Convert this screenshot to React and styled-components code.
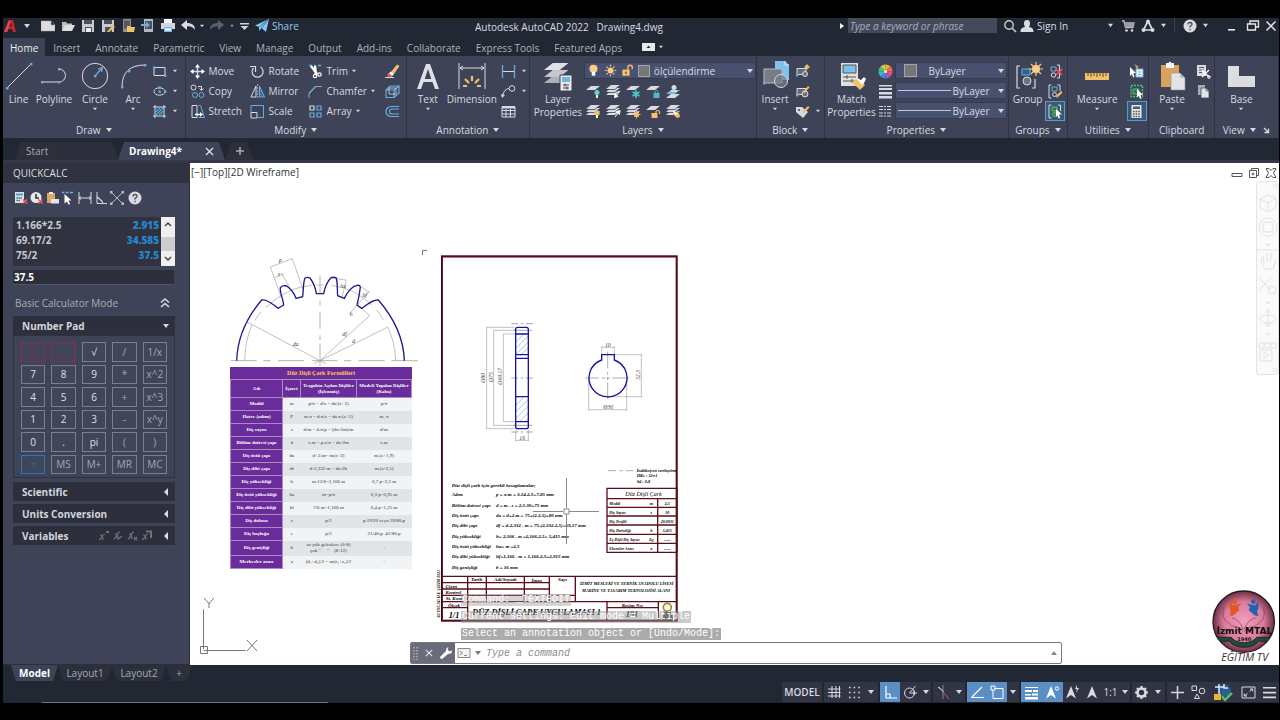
import React, { useState } from 'react'
import styled, { createGlobalStyle, css } from 'styled-components';

const ui = '"Open Sans", "Noto Sans", sans-serif';
const dark = '#222833';
const panel = '#3f4357';
const W = '#d9dbe2';
const B = '#68aee0';
const Y = '#f3c06b';

const GlobalStyle = createGlobalStyle`
  * { box-sizing: border-box; }
  html, body, #root { height: 100%; }
  body { margin: 0; background: #000; overflow: hidden; }
  button, input, select { font: inherit; color: inherit; margin: 0; }
  button { background: none; border: 0; padding: 0; cursor: pointer; }
  svg { display: block; flex: none; }
`

// ---------- icons ----------
const Sheet = ({ x = 0, y = 0, s = 1, fill = W }) => (
  <path d={`M${x + 5 * s} ${y}h${9 * s}l${-5 * s} ${4 * s}h${-9 * s}z`} fill={fill} />
)
const Stack = () => <><Sheet y={7} /><rect x="0" y="6.6" width="12" height=".8" fill={panel} /><Sheet y={4} /><path d="M0 8.5h9l4-3.4" stroke={panel} fill="none" strokeWidth=".8" /><Sheet y={1} /><path d="M0 5.5h9l4-3.4" stroke={panel} fill="none" strokeWidth=".8" /></>
const Cross = ({ x, y }) => <path d={`M${x} ${y}l4 4M${x + 4} ${y}l-4 4`} stroke="#ef5a5a" strokeWidth="1.6" />
const Dots = ({ pts }) => pts.map(([x, y]) => <rect key={x + '-' + y} x={x - 1} y={y - 1} width="2.4" height="2.4" fill={B} />)

const icons = {
  // title bar
  logo: <><path d="M1 13L6 1h4l3 12h-3l-.7-3H5.500l-1.300 3zM6.500 7.500h2.400L8 4z" fill="#c8262d" /><path d="M1 13L6 1l1.500 2L4.200 13z" fill="#e8464b" /></>,
  newFile: <path d="M0 2h10l4 4v6H0z M10 2v4h4" fill="#dcdcdf" stroke="#aaa" strokeWidth=".5" />,
  open: <><path d="M1 12V3h4l1 1.500h5V6" fill="#bdbec2" /><path d="M1 12L4 6h10l-3 6z" fill="#dedee0" /></>,
  save: <><path d="M1 1h12v12H1z" fill="#c9cacf" /><path d="M3 1h8v4H3zM4 8h7v5H4z" fill="#4b4f58" /><path d="M5 9h5v4H5z" fill="#ececee" /></>,
  saveAs: <><path d="M1 1h12v12H1z" fill="#c9cacf" /><path d="M3 1h8v4H3zM4 8h7v5H4z" fill="#4b4f58" /><path d="M6 13l6-7 2 2-6 5z" fill={Y} /></>,
  openWeb: <><path d="M2 0h8v13H2z" fill="#8d8e94" /><path d="M3 1.500h6v8H3z" fill="#55585f" /><path d="M6 13V7h3l1 1h4l-1 5z" fill={Y} /></>,
  saveMobile: <><path d="M3 0h9v13H3z" fill="#b4b6bb" /><path d="M4 2h7v8H4z" fill="#4b5260" /><path d="M0 5h5V2.500L9 6 5 9V7H0z" fill={B} /></>,
  print: <><path d="M3 0h8v4H3z" fill="#fff" /><path d="M0 4h14v6H0z" fill="#d4d5da" /><path d="M3 8h8v5H3z" fill="#72b7e8" /><path d="M4 9.500h6v2H4z" fill="#fff" /></>,
  undo: <path d="M0 6l6-5v3c5 0 8 2 8 7-2-3-4-4-8-3.700V11z" fill="#dadbe0" />,
  redo: <path d="M14 6L8 1v3C3 4 0 6 0 11c2-3 4-4 8-3.700V11z" fill="#5c606b" />,
  customize: <path d="M2 3h9v1.500H2zM2.500 6h8L6.500 10z" fill="#d0d2d8" />,
  plane: <><path d="M0 6.500L14 0l-3 13-4.500-4L4 12V8z" fill="#86c8f3" /><path d="M4 8l9-7-6.500 8" fill="none" stroke="#2d6d9b" strokeWidth=".8" /></>,
  search: <><circle cx="6" cy="6" r="4.200" fill="none" stroke="#c9cbd2" strokeWidth="1.400" /><path d="M9 9l4 4" stroke="#c9cbd2" strokeWidth="1.600" /></>,
  user: <path d="M7 1a3 3.400 0 013 3.400C10 6.500 9 7.500 9 8c3 .7 4.500 1.500 4.500 5h-13C.5 9.500 2 8.700 5 8c0-.5-1-1.500-1-3.600A3 3.400 0 017 1z" fill={W} />,
  cart: <><path d="M1 2h2l1.500 6.500H12L13 4H4" fill="none" stroke="#b9bbc2" strokeWidth="1.300" /><path d="M4 4h9l-1 4H5z" fill="#9b9da5" /><circle cx="5.500" cy="11.500" r="1.300" fill={W} /><circle cx="11" cy="11.500" r="1.300" fill={W} /></>,
  apps: <><path d="M7 2L2.500 11h9z" fill="none" stroke={W} strokeWidth="1.700" /><circle cx="7" cy="2.800" r="2" fill={W} /><circle cx="2.500" cy="11" r="2" fill={W} /><circle cx="11.500" cy="11" r="2" fill={W} /></>,
  help: <><circle cx="7" cy="7" r="6.500" fill={W} /><path d="M5 5.500Q5 3.500 7 3.500T9 5.300Q9 6.500 7 7.400V8.600M7 9.700v1.500" fill="none" stroke="#4a4e5b" strokeWidth="1.300" /></>,
  min: <path d="M3 10h7v1.600H3z" fill="#e6e7ea" />,
  restore: <path d="M4 5V2h8.500v6H10M1.500 5h8v6h-8z" fill="none" stroke="#e6e7ea" strokeWidth="1.300" />,
  close: <path d="M2.500 2.500l9 9M11.500 2.500l-9 9" stroke="#e6e7ea" strokeWidth="1.500" />,

  // draw
  line: <><path d="M3 27L27 3" stroke={W} /><Dots pts={[[3, 27], [27, 3]]} /></>,
  polyline: <><path d="M3 21h17a6.500 6.500 0 000-13" fill="none" stroke={W} /><Dots pts={[[3, 21], [20, 21], [20, 8]]} /></>,
  circle: <><circle cx="15" cy="15" r="12.700" fill="none" stroke={W} /><path d="M15 15l7-8m-4 1l4.300-1.300-.8 4.300" stroke={B} fill="none" strokeWidth="1.200" /><Dots pts={[[15, 15]]} /></>,
  arc: <><path d="M4 26Q4 4 27 4" fill="none" stroke={W} /><Dots pts={[[4, 26], [11, 10], [27, 4]]} /></>,
  rect: <><path d="M2 3.500h11v8H2z" fill="none" stroke={W} /><Dots pts={[[2, 3.500], [13, 11.500]]} /></>,
  ellipse: <><ellipse cx="7.500" cy="7.500" rx="5.500" ry="3.700" fill="none" stroke={W} /><Dots pts={[[7.500, 7.500], [7.500, 3.500], [13, 7.500]]} /></>,
  hatch: <><path d="M3 1v13M12 1v13M1 3h13M1 12h13" stroke={W} /><path d="M4 4h7v7H4z" fill="#386a97" /><path d="M4 8l4-4M4 11l7-7M7 11l4-4" stroke={B} /></>,

  // modify
  move: <><path d="M7.500 2v11M2 7.500h11" stroke={W} strokeWidth="1.400" /><path d="M7.500 0l2.500 3.500H5zM7.500 15L10 11.500H5zM0 7.500L3.500 5v5zM15 7.500L11.500 5v5z" fill="#fff" /></>,
  rotate: <><path d="M10.500 3A5.500 5.500 0 113.500 4" fill="none" stroke={W} strokeWidth="1.200" /><path d="M0 2.500h5.500V8" fill="none" stroke={W} strokeWidth="1.200" /></>,
  trim: <><path d="M1 1.500h3M6 1.500h2M10 1.500h3" stroke={B} strokeWidth="1.500" /><path d="M3 2l6 8M7 2l1 9" stroke="#fff" strokeWidth="2.400" /><circle cx="7" cy="12" r="1.700" fill="none" stroke="#fff" strokeWidth="1.200" /><circle cx="11.500" cy="10.500" r="1.700" fill="none" stroke="#fff" strokeWidth="1.200" /></>,
  copy: <><circle cx="3.500" cy="3.500" r="2.500" fill="none" stroke={W} /><circle cx="5" cy="11" r="2.500" fill="none" stroke={B} /><circle cx="11.500" cy="11" r="2.500" fill="none" stroke={B} /><path d="M8 2.500h3.500V6m-2-1.500l2 2 2-2" fill="none" stroke={W} /></>,
  mirror: <><path d="M6 2v11H1z" fill="none" stroke={W} /><path d="M9.500 2v11h5z" fill="#3b6f9d" stroke={B} /><path d="M7.700 0v15" stroke={W} strokeDasharray="2 1" strokeWidth=".7" /></>,
  chamfer: <><path d="M1 14V9.500L7.500 2.500H14" fill="none" stroke="#9fa3ae" /><path d="M1 9.500l6.500-7" stroke={B} strokeWidth="1.300" /></>,
  stretch: <><path d="M2 1.500h5v12H2z" fill="none" stroke={W} /><path d="M8.500 1.500h2l4 12h-6" fill="none" stroke={B} /><path d="M5 10.500h6" stroke="#fff" strokeWidth="1.500" /><path d="M10 8l3 2.500-3 2.500z" fill="#fff" /></>,
  scale: <><path d="M1 8.500V1.500h12.500v12H8" fill="none" stroke={B} /><path d="M1 8.500h6v5.500H1z" fill="none" stroke={W} /></>,
  array: <><path d="M2 2h4v4H2z" fill="none" stroke={W} strokeWidth="1.200" /><path d="M9 2h4v4H9zM2 9h4v4H2zM9 9h4v4H9z" fill="none" stroke={B} strokeWidth="1.200" /></>,
  erase: <><path d="M6 8l6-7.500 2.500 1.500L9 10z" fill={Y} /><path d="M3 10l3-2.500L9 10l-2.500 2.500z" fill="#fff" /><path d="M2 11l2-2 3 3-1 1H3z" fill="#e7574f" /><path d="M0 13.500h9" stroke={W} /></>,
  explode: <><path d="M1 6h8v7.500H1zM1 6l4-4h9L9 6M14 2v7l-5 4.500" fill="none" stroke={B} strokeWidth="1.200" /><path d="M4 4h7v6H4z" fill="none" stroke={W} strokeWidth=".8" /></>,
  offset: <path d="M14 2.500H6a5 5 0 000 10h8M14 5H7a2.500 2.500 0 000 5h7" fill="none" stroke={B} strokeWidth="1.200" />,

  // annotation
  text: <path d="M4 28L13 3h4l9 25h-4l-2.500-7h-9L8 28zM11.700 18h6.600L15 8z" fill="#dfe0e5" />,
  dimension: <><path d="M2 2v26M28 2v26" stroke={W} /><path d="M3 7h24M6 5L3 7l3 2M24 5l3 2-3 2" stroke={W} fill="none" /><path d="M6 25h4M20 25h4M8 18l4 4M15 15v5M22 18l-4 4" stroke={Y} strokeWidth="2.200" /></>,
  linear: <><path d="M1.500 1v13M13.500 1v13" stroke={B} strokeWidth="1.300" /><path d="M2 7.500h11" stroke={W} /></>,
  leader: <><circle cx="11" cy="4.500" r="2.800" fill="none" stroke={W} /><path d="M8 4.500Q3 5 1.500 12" stroke={W} fill="none" /><path d="M0 10l1 4 3-3z" fill={W} /></>,
  table: <><path d="M1 3h13v10H1zM1 6.500h13M1 10h13M5 5v8M9.500 5v8" fill="none" stroke={W} /><path d="M1 2h13v2.500H1z" fill={W} /></>,

  // layers
  layerProps: <><Sheet x={1} y={15} s={1.750} fill="#aeb0b7" /><Sheet x={1} y={9} s={1.750} fill="#c5c6cb" /><Sheet x={1} y={2} s={1.750} fill="#e0e1e4" /><path d="M17 14h12v16H17z" fill="#e9eaed" stroke={panel} /><path d="M19 16h8v5h-8z" fill="#6fb4e3" /><path d="M20 24h6M20 27h6M22 22.500v3M24 25.500v3" stroke="#444" /></>,
  bulb: <><circle cx="7.500" cy="5.500" r="4.700" fill="#f7cf85" /><path d="M5.500 9h4v4.500h-4z" fill="#fff" /></>,
  sun: <><circle cx="7.500" cy="7.500" r="3.500" fill="#f7cb7c" /><path d="M7.500 1v2M7.500 12v2M1 7.500h2M12 7.500h2M3 3l1.500 1.500M12 3l-1.500 1.500M3 12l1.500-1.500M12 12l-1.500-1.500" stroke="#f7cb7c" strokeWidth="1.400" /></>,
  unlock: <><path d="M1.500 6.500H10v7H1.500z" fill={Y} /><path d="M8 7V4q0-2.500 2.500-2.500T13 4v2" fill="none" stroke={Y} strokeWidth="1.600" /><path d="M5.700 9v2.500" stroke="#444" strokeWidth="1.400" /></>,
  layOff: <><Sheet y={2} /><circle cx="11" cy="8.500" r="2.500" fill="#66d3d6" /><path d="M10 11h2v3h-2z" fill="#eee" /></>,
  layIso: <><Stack /><path d="M14 7l-4 5M8.500 13.500l.5-4 3 3z" stroke="#fff" fill="#fff" /></>,
  layFreeze: <><Sheet y={2} /><path d="M10 6v8M6.500 8l7 4M13.500 8l-7 4" stroke="#4fc6c6" strokeWidth="1.700" /></>,
  layLock: <><Sheet y={2} /><path d="M7.500 9h6v5h-6z" fill="#4fb9cf" /><path d="M9 9V7.500q1.500-2.500 3 0V9" fill="none" stroke="#4fb9cf" /></>,
  layCurrent: <><Sheet y={10} /><Sheet y={6} fill="#75b9e6" /><circle cx="8" cy="3.500" r="2.500" fill={W} /><path d="M5 6h6v2H5z" fill={W} /></>,
  layOn: <><Stack /><circle cx="11" cy="9" r="2.700" fill={Y} /><path d="M10 11h2v3h-2z" fill="#fff" /></>,
  layUniso: <><Stack /><path d="M9 13l4-5M14 6.500l-.5 4-3-3z" stroke="#fff" fill="#fff" /></>,
  layThaw: <><Stack /><circle cx="10.500" cy="10.500" r="2.500" fill={Y} /><path d="M10.500 6.500v8M6.500 10.500h8M8 8l5 5M13 8l-5 5" stroke={Y} /></>,
  layUnlock: <><Sheet y={2} /><path d="M5.500 9h6v5h-6z" fill={Y} /><path d="M10 9V7.500q1.700-2.500 3.500 0V10" fill="none" stroke={Y} strokeWidth="1.200" /></>,
  layMatch: <><Stack /><path d="M8 8l5 1 1 4-3 1-4-4z" fill={Y} /><path d="M7.500 7.500l3 3" stroke="#fff" strokeWidth="1.500" /></>,

  // block
  insert: <><path d="M15 0h10l4 4v15H15z" fill="#7fc1ef" /><path d="M25 0v4h4" fill="none" stroke="#d7ecfa" /><path d="M4 8h18v14H4z" fill="#777c88" stroke="#b7bac3" /><circle cx="21" cy="20" r="6.500" fill="#777c88" fillOpacity=".7" stroke="#d9dbe2" /><Dots pts={[[4, 22]]} /></>,
  blockNew: <><path d="M2 4.500h9v6H2z" fill="#666b79" stroke={W} /><circle cx="10" cy="10" r="2.500" fill="#6f7380" stroke={W} /><circle cx="12" cy="3" r="2" fill={Y} /><path d="M12 0v6M9 3h6" stroke={Y} strokeWidth=".8" /><Dots pts={[[2, 11]]} /></>,
  blockEdit: <><path d="M2 4.500h9v6H2z" fill="#666b79" stroke={W} /><circle cx="10" cy="10" r="3" fill="#6f7380" stroke={W} /><path d="M8 8l5-6 1.500 1.200-5 6z" fill={Y} /><Dots pts={[[2, 11]]} /></>,
  attr: <><path d="M1 3h6l6 5-5 6-7-6z" fill={W} /><path d="M7 8l6-6 1.500 1.500-6 6z" fill={Y} /><circle cx="4" cy="6" r="1" fill={panel} /></>,

  // properties
  match: <><path d="M4 2h17v23H4z" fill="#dfe0e4" /><path d="M6 4h13v8H6z" fill="#7cbfec" stroke="#555" /><path d="M6 16h13M6 20h13M10 14v4M15 18v4" stroke="#555" /><path d="M15 21l6-4 7 7-5 5z" fill={Y} /><path d="M19 17l5 2 3-3 2 2-2 4-2 2z" fill="#fff" /></>,
  wheel: <>
    {['#f4a83d', '#f2733a', '#e34f7a', '#9c5cc4', '#4a7fe0', '#3fb6d8', '#4fc16b', '#c5d14b'].map((c, i) => {
      const a = i * Math.PI / 4, b = a + Math.PI / 4;
      return <path key={c} fill={c} d={`M7.500 7.500L${7.5 + 7 * Math.sin(a)} ${7.5 - 7 * Math.cos(a)}A7 7 0 01${7.5 + 7 * Math.sin(b)} ${7.5 - 7 * Math.cos(b)}z`} />
    })}<circle cx="7.500" cy="7.500" r="1.500" fill="#eee" /></>,
  weights: <path d="M1 1h13v1.500H1zM1 4h13v2H1zM1 8h13v2.500H1zM1 12h13v2.500H1z" fill={W} />,
  types: <path d="M1 2.500h13M1 5.500h13M1 9h13M1 12h13" stroke={W} strokeDasharray="4 1 2 1" />,

  // groups
  group: <><path d="M7 5H4v22h3M19 27h3V18" fill="none" stroke={W} strokeWidth="1.200" /><path d="M9 8h8v6H9z" fill="#2d628f" stroke={B} /><circle cx="14" cy="20" r="4" fill="#6e7380" stroke={W} /><circle cx="23" cy="8" r="4" fill="#f7cf85" /><path d="M23 1v14M16 8h14M18 3l10 10M28 3L18 13" stroke="#f7cf85" strokeWidth="1.200" /></>,
  ungroup: <><path d="M3 3h5v4H3z" fill="none" stroke={B} /><circle cx="5.500" cy="11" r="2.200" fill="none" stroke={W} /><path d="M9 1h2.500v13H9" stroke={W} fill="none" /><path d="M8 5l6 6M14 5l-6 6" stroke="#ef5757" strokeWidth="1.600" /></>,
  groupEdit: <><path d="M3.500 1H1v13h2.500M9.500 1H12v6" stroke={W} fill="none" /><path d="M4 3h5v4H4z" fill="none" stroke={B} /><circle cx="6.500" cy="10.500" r="2" fill="none" stroke={W} /><path d="M8 14l1-3 4-4 1.500 1.500-4 4z" fill={Y} /></>,
  groupSel: <><path d="M3.500 1H1v13h2.500M10 1h2.500v6" stroke={W} fill="none" /><path d="M4 3h5v4H4z" fill="#377c4f" stroke="#54c27b" /><circle cx="6.500" cy="10.500" r="2" fill="#377c4f" stroke="#54c27b" /><path d="M8 5l6 5.500H11L12 14l-1.500.5-1-3L8 13z" fill="#fff" /></>,

  // utilities
  measure: <><path d="M3 12h24v7H3z" fill={Y} /><path d="M6 12v3M9 12v4M12 12v3M15 12v4M18 12v3M21 12v4M24 12v3" stroke="#5a4a2c" /></>,
  quickSel: <><path d="M7 5h7v8H7z" fill="#eaf4fb" stroke={B} /><path d="M9 8h3M9 10.500h3" stroke={B} /><path d="M1 3l6 6H4.500l1 4-1.500.5-1-3.500L1 12z" fill="#fff" /><path d="M5 0l5 3-2 .5 2 3-4-3h2z" fill={Y} /></>,
  selAll: <><path d="M2 1.500h11.500v11H2z" fill="none" stroke="#53c27a" strokeDasharray="2 1" strokeWidth="1.300" /><path d="M4 5h6v5H4z" fill="#2f7a4b" stroke="#53c27a" /><path d="M8 5l6 6h-2.500l1 3.500-1.500.4-1-3L8 13z" fill="#fff" /></>,
  calc: <><path d="M2.500 1h10v13h-10z" fill="#e5e6ea" /><path d="M4 2.500h7v2.500H4z" fill="#555a68" /><path d="M4 7.500h7M4 10h7M4 12.500h7" stroke="#555a68" strokeDasharray="1.600 1" strokeWidth="1.400" /></>,

  // clipboard, view
  paste: <><path d="M4 4h18v22H4z" fill="#d9a35e" /><path d="M9 2h2.500q1.500-3 3 0H17v5H9z" fill="#f3f3f4" /><path d="M14 12h9l5 5v12H14z" fill="#e2e3e6" stroke="#8b8d95" strokeWidth=".6" /><path d="M23 12v5h5" fill="#bbb" /></>,
  cut: <><path d="M1 1h9v11H1z" fill={W} /><path d="M3 3.500h5M3 6h5M3 8.500h3" stroke="#555" /><path d="M6 6l7 7M13 6l-7 7" stroke="#fff" strokeWidth="1.200" /><circle cx="13" cy="13" r="1.300" fill="none" stroke="#fff" /></>,
  copyClip: <><path d="M2 1h7v10H2z" fill="#aaacb4" /><path d="M5 4h5l3 3v7H5z" fill="#e4e5e8" stroke={panel} strokeWidth=".8" /><path d="M10 4v3h3" fill="none" stroke="#777" /></>,
  base: <path d="M2 5h11v10h16v11H2z" fill="#dcdde1" />,
  launcher: <path d="M3 3l4 4M7.500 3.500v4h-4" stroke={W} fill="none" strokeWidth="1.300" />,

  // calculator toolbar
  clear: <><path d="M1 1h9v11H1z" fill="#dfe1e6" /><path d="M2 2.500h7v2H2z" fill="#4f9bd4" /><path d="M2.500 7h6M2.500 9.500h4" stroke="#456" strokeDasharray="1.300 .7" strokeWidth="1.400" /><Cross x={9} y={8.500} /></>,
  clearHist: <><circle cx="6" cy="6.500" r="5.500" fill="#e6e7ea" /><path d="M6 3v4h3" stroke="#333" fill="none" strokeWidth="1.600" /><Cross x={8.500} y={8.500} /></>,
  pasteVal: <><path d="M1 2h8v10H1z" fill="#dba762" /><path d="M3 1h4v2H3z" fill="#eee" /><path d="M5 8h8v4.500H5z" fill="#e5e6e9" /></>,
  getCoord: <><path d="M0 1.500h2.500M4 1.500h2.500M8 1.500h3" stroke="#6db5e8" strokeWidth="1.600" /><path d="M2.500 3l7 6.500H6.500l1.500 3.500-1.500.7L5 10.500l-2.500 2z" fill="#fff" /></>,
  distance: <path d="M1 1v12M13 1v12M1 7h12M1 7l2-1.500M1 7l2 1.500M13 7l-2-1.500M13 7l-2 1.500" stroke={W} fill="none" />,
  angle: <path d="M3 1v11.500h10M3 7q5 .5 6 5.500M3 5l5 6" stroke={W} fill="none" />,
  intersect: <><path d="M2 2l10 10M12 2L2 12" stroke={W} strokeWidth=".8" /><path d="M0 0h2.500v2.500H0zM11.500 0H14v2.500h-2.500zM0 11.500h2.500V14H0zM11.500 11.500H14V14h-2.500zM6 6h2v2H6z" fill="#b9bbc2" /></>,
  chevrons: <path d="M3 6.500L7 3l4 3.500M3 11l4-3.500 4 3.500" stroke={W} fill="none" strokeWidth="1.600" />,
  varTools: <g fill="none" stroke="#70737f" strokeWidth="1.200"><path d="M0 11q2-1 3-3.500T6 5M1 6q3 0 3 5M15 10q2-1 3-4t3-3M16 5q3 0 3 5l4-3M29 10q2-1 3-4t3-3M30 5q3 0 3 5M35 8l3 3m0-3l-3 3M43 11q2-1 3-3.500T49 5M44 6q3 0 3 5" /><path d="M7 3h3M47 2.500h5V9" strokeWidth="2" /></g>,

  // status bar
  grid: <path d="M5 1v12M9 1v12M1 4h12.500M1 7.500h12.500M1 11h12.500M12.500 1v12" stroke={W} />,
  snap: <path d="M2 2.500h11M2 7.500h11M2 12.500h11" stroke={W} strokeWidth="1.600" strokeDasharray="1.600 3" />,
  ortho: <path d="M3 1v12h11M3 9h4v4" stroke="#fff" fill="none" strokeWidth="1.200" />,
  polar: <><circle cx="6.500" cy="8" r="5" fill="none" stroke={W} /><path d="M6.500 8l6-7M6.500 8H14M11 5v5" stroke={W} fill="none" /></>,
  iso: <><path d="M7 0v14" stroke="#7e8290" /><path d="M3 2l5 5" stroke="#59b36a" /><path d="M6 6l7 8" stroke="#d25d5d" /><path d="M2 2l5 4" stroke={W} /></>,
  track: <path d="M1 12.500h13M2 12L12 2" stroke="#fff" strokeWidth="1.200" />,
  osnap: <><path d="M3 3.500h10v10H3z" fill="none" stroke="#fff" /><path d="M1 1h4v4H1z" fill="#5b93c8" stroke="#fff" /></>,
  lwt: <path d="M1 2h13v1H1zM1 5h7v2H1zM9 5h5v2H9zM1 9h6v1.500H1zM8 8.500h6v2H8zM1 12h13v2.500H1z" fill="#fff" />,
  anno1: <><path d="M6 1l5 12.500L6 10l-5 3.500z" fill="#fff" /><circle cx="12" cy="3.500" r="1.700" fill="none" stroke="#fff" /></>,
  anno2: <><path d="M6 1l5 12.500L6 10l-5 3.500z" fill={W} /><path d="M12 0l-2 4h2l-1 4 3-5h-2z" fill={W} /></>,
  anno3: <path d="M7 1l5 12.500L7 10l-5 3.500z" fill={W} />,
  gear: <><circle cx="7.500" cy="7.500" r="4" fill="none" stroke={W} strokeWidth="2.600" /><path d="M7.500 1v2.500M7.500 11.500V14M1 7.500h2.500M11.500 7.500H14M3 3l2 2M10 10l2 2M12 3l-2 2M5 10l-2 2" stroke={W} strokeWidth="2.200" /></>,
  plus: <path d="M7.500 1v13M1 7.500h13" stroke={W} strokeWidth="1.500" />,
  isolate: <><path d="M1 1h4.500v4.500H1z" fill="none" stroke={W} /><circle cx="11" cy="6" r="2.800" fill="none" stroke={W} /><path d="M6 9l-2.500 4.500h5z" fill="none" stroke={W} /></>,
  perf: <><circle cx="10.500" cy="8" r="6.500" fill="#2c5f8f" /><path d="M1 4h9M5 1v10M10 1v4h4" stroke="#d8e9f7" strokeWidth="1.500" fill="none" /><path d="M0 11h7v6H0z" fill="#f1b233" /><path d="M8 13.500l3 3.500 7-7" stroke="#5cbf5f" strokeWidth="2.400" fill="none" /></>,
  full: <path d="M1 2h13v11H1zM8.500 6.500L11.500 4M9 4h2.700v2.500M6.500 8.500l-3 2.500M3.300 8.500V11H6" stroke={W} fill="none" />,
  menu: <path d="M1 2h13v1.600H1zM1 6.800h13v1.600H1zM1 11.600h13v1.600H1z" fill={W} />,
  wrench: <path d="M1 11l6-6q-.5-3 2.500-4l-1 2.500 2 2L13 4.500q0 3.500-4 3.500l-6 5q-2 0-2-2z" fill="#fff" />,
  grip: <path d="M1 1v13M4 1v13" stroke="#c4c5cd" strokeWidth="1.200" strokeDasharray="1.500 1.500" />,
  prompt: <><path d="M3 2.500h12v9H3z" fill="#f3f3f3" stroke="#888" /><path d="M5 5l2.500 2L5 9M9 9.500h3" stroke="#888" fill="none" /></>,
}

const Icon = ({ name, w = 15, h = w, box = w }) => (
  <svg width={w} height={h} viewBox={`0 0 ${box} ${Math.round(box * h / w)}`} aria-hidden="true">{icons[name]}</svg>
)
const Caret = ({ s = 6, c = '#d5d7de' }) => (
  <svg width={s} height={s} viewBox="0 0 6 6" aria-hidden="true"><path d="M0 1h6L3 5z" fill={c} /></svg>
)

// ---------- title bar ----------
const Frame = styled.div`
  height: 100vh;
  padding: 18px 1px 17px 3px;
  display: flex;
  flex-direction: column;
  font: 10px/14px ${ui};
  color: #d9dbe1;
`
const Shell = styled.div`
  flex: 1;
  min-height: 0;
  display: flex;
  flex-direction: column;
  background: ${dark};
`
const TitleBar = styled.header`
  display: flex;
  height: 20px;
  align-items: flex-start;
`
const Group = styled.div`
  display: flex;
  height: 15px;
  align-items: center;
`
const Slot = styled.button`
  width: ${p => p.$w}px;
  height: 15px;
  display: flex;
  justify-content: center;
  align-items: center;
`
const Share = styled.button`
  display: flex;
  align-items: center;
  gap: 3px;
  margin-left: 3px;
  color: #8fc9f0;
`
const Title = styled.h1`
  flex: 1;
  margin: 0;
  padding: 2px 0 0;
  font-size: 10px;
  font-weight: 400;
  text-align: center;
  white-space: pre;
`
const Search = styled.input`
  width: 149px;
  height: 15px;
  margin: 0 3px;
  padding: 0 2px;
  border: 0;
  background: #434a5b;
  font-style: italic;
  &::placeholder { color: #a9adb8; opacity: 1; }
`
const SignIn = styled.button`
  display: flex;
  gap: 3px;
  width: 84px;
  align-items: center;
  white-space: nowrap;
`
const Rule = styled.span`
  width: 1px;
  height: 15px;
  margin: 0 5px 0 4px;
  background: #3a404e;
`
const WindowSlots = styled.div`
  display: flex;
  margin-left: 11px;
`

const TopBar = () => (
  <TitleBar>
    <Group>
      <Slot $w={14} aria-label="Application menu"><Icon name="logo" w={14} /></Slot>
      <Slot $w={20} aria-label="More"><Caret /></Slot>
      {[['newFile', 21], ['open', 20], ['save', 20], ['saveAs', 20], ['openWeb', 20], ['saveMobile', 20], ['print', 20], ['undo', 20]].map(([n, w]) =>
        <Slot key={n} $w={w} aria-label={n}><Icon name={n} w={14} /></Slot>
      )}
      <Slot $w={8} aria-label="Undo list"><Caret s={4} /></Slot>
      <Slot $w={22} aria-label="Redo"><Icon name="redo" w={14} /></Slot>
      <Slot $w={8} aria-label="Redo list"><Caret s={4} c="#8b8f9a" /></Slot>
      <Slot $w={16} aria-label="Customize"><Icon name="customize" w={12} /></Slot>
      <Share><Icon name="plane" w={14} />Share</Share>
    </Group>
    <Title>{'Autodesk AutoCAD 2022   Drawing4.dwg'}</Title>
    <Group>
      <svg width="6" height="8" viewBox="0 0 6 8"><path d="M1 1l4 3-4 3z" fill="#fff" /></svg>
      <Search placeholder="Type a keyword or phrase" aria-label="Search" />
      <Slot $w={20} aria-label="Search"><Icon name="search" w={14} /></Slot>
      <SignIn><Icon name="user" w={14} />Sign In</SignIn>
      <Slot $w={13} aria-label="Account"><Caret s={5} /></Slot>
      <Slot $w={22} aria-label="Store"><Icon name="cart" w={14} /></Slot>
      <Slot $w={18} aria-label="Apps"><Icon name="apps" w={14} /></Slot>
      <Slot $w={13} aria-label="Apps list"><Caret s={5} /></Slot>
      <Rule />
      <Slot $w={20} aria-label="Help"><Icon name="help" w={14} /></Slot>
      <Slot $w={10} aria-label="Help list"><Caret s={5} /></Slot>
      <WindowSlots>
        <Slot $w={22} aria-label="Minimize"><Icon name="min" w={14} /></Slot>
        <Slot $w={20} aria-label="Restore"><Icon name="restore" w={14} /></Slot>
        <Slot $w={16} aria-label="Close"><Icon name="close" w={14} /></Slot>
      </WindowSlots>
    </Group>
  </TitleBar>
)

// ---------- ribbon ----------
const Tabs = styled.nav`
  display: flex;
  height: 18px;
  align-items: stretch;
`
const Tab = styled.button`
  padding: 1px 7px 0;
  margin-right: 1px;
  white-space: nowrap;
  color: ${p => p.$on ? '#eceef2' : '#aeb2bc'};
  background: ${p => p.$on ? panel : 'none'};
`
const Toggle = styled.button`
  display: flex;
  align-items: center;
  gap: 4px;
  margin-left: 12px;
  svg:first-child { background: #e8e9ec; }
`
const Ribbon = styled.section`
  display: flex;
  height: 82px;
  background: ${panel};
`
const Panel = styled.div`
  flex: ${p => p.$w} 1 0;
  min-width: 0;
  display: flex;
  flex-direction: column;
  border-right: 1px solid #2e3242;
`
const Tools = styled.div`
  flex: 1;
  display: flex;
  align-items: flex-start;
  padding: 5px 0 0 ${p => p.$pad || 0}px;
`
const PanelTitle = styled.div`
  display: flex;
  justify-content: center;
  align-items: center;
  gap: 5px;
  height: 16px;
`
const Big = styled.button`
  flex: none;
  width: ${p => p.$w}px;
  display: flex;
  flex-direction: column;
  align-items: center;
  line-height: 13px;
  span { margin-top: 2px; white-space: nowrap; }
  svg + span + svg { margin-top: 1px; }
`
const Col = styled.div`
  flex: none;
  width: ${p => p.$w ? p.$w + 'px' : 'auto'};
  display: flex;
  flex-direction: column;
`
const Row = styled.div`
  display: flex;
  align-items: center;
  height: 20px;
`
const Tool = styled.button`
  display: flex;
  align-items: center;
  gap: 4px;
  height: 20px;
  white-space: nowrap;
  ${p => p.$w && css`width: ${p.$w}px; justify-content: center;`}
  ${p => p.$on && css`background: #3b5875; outline: 1px solid #5d98c9; outline-offset: -1px;`}
`
const Combo = styled.label`
  display: flex;
  align-items: center;
  gap: ${p => p.$gap || 4}px;
  height: 17px;
  width: ${p => p.$w}px;
  margin: 1px 0 2px;
  padding: 0 2px 0 ${p => p.$pad || 2}px;
  background: #485270;
  border: 1px solid #353a4c;
  select {
    flex: 1;
    min-width: 0;
    height: 15px;
    padding: 0;
    line-height: 14px;
    border: 0;
    appearance: none;
    background: none;
  }
`
const Swatch = styled.i`
  width: ${p => p.$s}px;
  height: ${p => p.$s}px;
  background: #777;
  border: 1px solid #a5a5a5;
`
const Stroke = styled.i`
  flex: none;
  width: 53px;
  height: 1px;
  background: #c3cad8;
`

const BigTool = ({ icon, w, lines, caret }) => (
  <Big $w={w}>
    <Icon name={icon} w={30} />
    <span>{lines.map((l, i) => <React.Fragment key={l}>{i > 0 && <br />}{l}</React.Fragment>)}</span>
    {caret && <Caret s={4} />}
  </Big>
)

const RibbonPanel = ({ title, w, pad, caret = true, launcher, children }) => (
  <Panel $w={w}>
    <Tools $pad={pad}>{children}</Tools>
    <PanelTitle>{title}{caret && <Caret />}{launcher && <Icon name="launcher" w={10} />}</PanelTitle>
  </Panel>
)

const SmallCol = ({ list, w = 17, carets = [], on }) => (
  <Col>
    {list.map((n, i) => (
      <Row key={n}>
        <Tool $w={w} $on={on === n} aria-label={n}><Icon name={n} w={15} /></Tool>
        {carets.includes(i) && <Tool $w={11} aria-label={n + ' options'}><Caret s={4} /></Tool>}
      </Row>
    ))}
  </Col>
)

const modify = [
  [60, [['move', 'Move'], ['copy', 'Copy'], ['stretch', 'Stretch']]],
  [58, [['rotate', 'Rotate'], ['mirror', 'Mirror'], ['scale', 'Scale']]],
  [76, [['trim', 'Trim', 1], ['chamfer', 'Chamfer', 1], ['array', 'Array', 1]]],
]

const RibbonBar = () => (
  <Ribbon>
    <RibbonPanel title="Draw" w={183}>
      <BigTool icon="line" w={31} lines={['Line']} />
      <BigTool icon="polyline" w={40} lines={['Polyline']} />
      <BigTool icon="circle" w={42} lines={['Circle']} caret />
      <BigTool icon="arc" w={34} lines={['Arc']} caret />
      <SmallCol list={['rect', 'ellipse', 'hatch']} w={19} carets={[0, 1, 2]} />
    </RibbonPanel>
    <RibbonPanel title="Modify" w={222} pad={4}>
      {modify.map(([w, list]) => (
        <Col key={w} $w={w}>
          {list.map(([n, label, caret]) => (
            <Tool key={n}><Icon name={n} w={15} />{label}{caret && <Caret s={4} />}</Tool>
          ))}
        </Col>
      ))}
      <SmallCol list={['erase', 'explode', 'offset']} />
    </RibbonPanel>
    <RibbonPanel title="Annotation" w={123} pad={4}>
      <BigTool icon="text" w={34} lines={['Text']} caret />
      <BigTool icon="dimension" w={54} lines={['Dimension']} />
      <SmallCol list={['linear', 'leader', 'table']} w={20} carets={[0, 1]} />
    </RibbonPanel>
    <RibbonPanel title="Layers" w={228} pad={2}>
      <BigTool icon="layerProps" w={52} lines={['Layer', 'Properties']} />
      <Col>
        <Combo $w={172}>
          <Icon name="bulb" w={13} box={15} />
          <Icon name="sun" w={13} box={15} />
          <Icon name="unlock" w={13} box={15} />
          <Swatch $s={12} />
          <select aria-label="Layer" defaultValue="ölçülendirme"><option>ölçülendirme</option></select>
          <Caret />
        </Combo>
        {[['layOff', 'layIso', 'layFreeze', 'layLock', 'layCurrent'], ['layOn', 'layUniso', 'layThaw', 'layUnlock', 'layMatch']].map(r => (
          <Row key={r[0]}>{r.map(n => <Tool key={n} $w={20} aria-label={n}><Icon name={n} w={15} /></Tool>)}</Row>
        ))}
      </Col>
    </RibbonPanel>
    <RibbonPanel title="Block" w={67} pad={1}>
      <BigTool icon="insert" w={34} lines={['Insert']} caret />
      <SmallCol list={['blockNew', 'blockEdit', 'attr']} w={20} carets={[2]} />
    </RibbonPanel>
    <RibbonPanel title="Properties" w={185} pad={2}>
      <BigTool icon="match" w={50} lines={['Match', 'Properties']} />
      <SmallCol list={['wheel', 'weights', 'types']} w={18} />
      <Col>
        <Combo $w={112} $gap={12} $pad={8}>
          <Swatch $s={13} />
          <select aria-label="Object color" defaultValue="ByLayer"><option>ByLayer</option></select>
          <Caret />
        </Combo>
        <Combo $w={112} $gap={2}>
          <Stroke />
          <select aria-label="Lineweight" defaultValue="ByLayer"><option>ByLayer</option></select>
          <Caret />
        </Combo>
        <Combo $w={112} $gap={2}>
          <Stroke />
          <select aria-label="Linetype" defaultValue="ByLayer"><option>ByLayer</option></select>
          <Caret />
        </Combo>
      </Col>
    </RibbonPanel>
    <RibbonPanel title="Groups" w={58} pad={1}>
      <BigTool icon="group" w={35} lines={['Group']} />
      <SmallCol list={['ungroup', 'groupEdit', 'groupSel']} w={20} on="groupSel" />
    </RibbonPanel>
    <RibbonPanel title="Utilities" w={81}>
      <BigTool icon="measure" w={59} lines={['Measure']} caret />
      <SmallCol list={['quickSel', 'selAll', 'calc']} w={20} on="calc" />
    </RibbonPanel>
    <RibbonPanel title="Clipboard" w={66} caret={false}>
      <BigTool icon="paste" w={46} lines={['Paste']} caret />
      <SmallCol list={['cut', 'copyClip']} />
    </RibbonPanel>
    <RibbonPanel title="View" w={63} launcher>
      <BigTool icon="base" w={52} lines={['Base']} caret />
    </RibbonPanel>
  </Ribbon>
)

// ---------- file tabs ----------
const FileTabs = styled.nav`
  display: flex;
  height: 25px;
  padding: 4px 0 0 12px;
  border-bottom: 3px solid #343849;
`
const FileTab = styled.button`
  display: flex;
  align-items: center;
  justify-content: space-between;
  width: ${p => p.$w}px;
  padding: 0 10px 0 11px;
  text-align: left;
  color: ${p => p.$on ? '#fff' : '#a5a8b2'};
  font-weight: ${p => p.$on ? 700 : 400};
  background: ${p => p.$on ? panel : '#2d303c'};
  clip-path: polygon(6px 0, calc(100% - 6px) 0, 100% 100%, 0 100%);
`

// ---------- quickcalc ----------
const Body = styled.main`
  flex: 1;
  min-height: 0;
  display: flex;
`
const Side = styled.aside`
  flex: none;
  width: 187px;
  background: ${panel};
  border-right: 1px solid #2b2f3c;
  border-bottom: 1px solid #2b2f3c;
`
const SideTitle = styled.h2`
  margin: 0;
  padding: 0 10px;
  height: 20px;
  font-size: 10px;
  line-height: 20px;
  font-weight: 400;
  background: #30333f;
`
const CalcTools = styled.div`
  display: flex;
  gap: 2px;
  padding: 8px 11px 0;
  button { width: 14px; display: flex; justify-content: center; }
  button:last-child { width: 18px; }
`
const CalcBody = styled.div`
  width: 162px;
  margin: 12px 0 0 10px;
`
const History = styled.div`
  display: flex;
  height: 49px;
  background: #30333f;
  font-weight: 700;
  color: #c6c9d1;
`
const HistoryRows = styled.div`
  flex: 1;
  padding: 1px 2px 1px 3px;
  line-height: 15px;
  div { display: flex; justify-content: space-between; }
  b { color: #2387cf; }
`
const Scroll = styled.div`
  width: 14px;
  display: flex;
  flex-direction: column;
  justify-content: space-between;
  align-items: center;
  background: linear-gradient(#f0f0f0 0 20px, #cdcdcd 20px 34px, #f0f0f0 34px);
  button { height: 14px; display: flex; align-items: center; }
`
const Result = styled.input`
  width: 161px;
  height: 15px;
  margin-top: 4px;
  padding: 0 1px;
  border: 0;
  border-bottom: 1px solid #50556a;
  background: #2c2f3a;
  color: #fff;
  font-weight: 700;
`
const Mode = styled.div`
  display: flex;
  justify-content: space-between;
  align-items: center;
  height: 31px;
  padding: 4px 3px 0 2px;
  color: #a9acb7;
`
const Section = styled.button`
  display: flex;
  justify-content: space-between;
  align-items: center;
  width: 100%;
  height: 19px;
  margin-bottom: ${p => p.$open ? 0 : 3}px;
  padding: 0 6px 0 9px;
  font-weight: 700;
  color: #d3d5dc;
  background: #2d303c;
  span { flex: 1; text-align: left; }
  svg + svg { margin-left: 10px; }
`
const Pad = styled.div`
  display: grid;
  grid-template-columns: repeat(5, 1fr);
  grid-auto-rows: 1fr;
  gap: 3px 6px;
  height: 143px;
  margin-bottom: 4px;
  padding: 6px 7px 3px;
  border: 1px solid #30333f;
`
const Key = styled.button`
  border: 1px solid ${p => p.$c || '#7b7f8e'};
  background: #414559;
  color: ${p => p.$c || (p.$dim ? '#a3a7b3' : '#dfe1e6')};
`

const keys = ['C', '←', '√', '/', '1/x', '7', '8', '9', '*', 'x^2', '4', '5', '6', '+', 'x^3', '1', '2', '3', '-', 'x^y', '0', '.', 'pi', '(', ')', '=', 'MS', 'M+', 'MR', 'MC'];
const bright = ['√', 'pi', '.'];

const Left = () => <svg width="6" height="8" viewBox="0 0 6 8"><path d="M5 0v8L1 4z" fill={W} /></svg>

const QuickCalc = () => {
  const [value, setValue] = useState('37.5')
  return (
    <Side>
      <SideTitle>QUICKCALC</SideTitle>
      <CalcTools>
        {['clear', 'clearHist', 'pasteVal', 'getCoord', 'distance', 'angle', 'intersect', 'help'].map(n =>
          <button key={n} aria-label={n}><Icon name={n} w={14} /></button>
        )}
      </CalcTools>
      <CalcBody>
        <History>
          <HistoryRows>
            <div>1.166*2.5<b>2.915</b></div>
            <div>69.17/2<b>34.585</b></div>
            <div>75/2<b>37.5</b></div>
          </HistoryRows>
          <Scroll>
            <button aria-label="Scroll up"><svg width="8" height="6" viewBox="0 0 8 6"><path d="M1 5l3-3 3 3" fill="none" stroke="#444" strokeWidth="1.500" /></svg></button>
            <button aria-label="Scroll down"><svg width="8" height="6" viewBox="0 0 8 6"><path d="M1 1l3 3 3-3" fill="none" stroke="#444" strokeWidth="1.500" /></svg></button>
          </Scroll>
        </History>
        <Result aria-label="Result" value={value} onChange={e => setValue(e.target.value)} />
        <Mode>Basic Calculator Mode<Icon name="chevrons" w={14} /></Mode>
        <Section $open><span>Number Pad</span><Caret /></Section>
        <Pad>
          {keys.map((k, i) => (
            <Key key={k} $c={i < 2 ? '#8c2f45' : k === '=' ? '#2879b3' : null} $dim={isNaN(k) && !bright.includes(k)}
              onClick={() => !isNaN(k) && setValue(value + k)}>{k}</Key>
          ))}
        </Pad>
        <Section><span>Scientific</span><Left /></Section>
        <Section><span>Units Conversion</span><Left /></Section>
        <Section><span>Variables</span><Icon name="varTools" w={54} h={13} /><Left /></Section>
      </CalcBody>
    </Side>
  )
}

// ---------- model space ----------
const Canvas = styled.section`
  position: relative;
  flex: 1;
  min-width: 0;
  background: #fff;
  color: #333;
  overflow: hidden;
`
const Item = styled.div`
  position: absolute;
  left: ${p => p.$x}px;
  top: ${p => p.$y}px;
`
const ViewLabel = styled.div`
  padding: 2px 1px;
`
const Serif = styled.svg`
  font-family: "Liberation Serif", serif;
`
const WindowButtons = styled.div`
  position: absolute;
  top: 4px;
  right: 2px;
  display: flex;
  gap: 5px;
`
const NavBar = styled.div`
  position: absolute;
  top: 18px;
  right: 0;
  width: 23px;
  height: 194px;
  border: 1px solid #e4e4e4;
  border-radius: 3px;
  background: #fafafa;
`

const Gear = () => (
  <Serif width="230" height="121" viewBox="0 0 690 363" fontSize="17" fontStyle="italic" fill="none">
    <g stroke="#a0a0a0" strokeWidth="2">
      <path d="M107 347h78m20 0h22m22 0h78m25 0h75m20 0h22m22 0h78m20 0h80" stroke="#8c8c8c" />
      <path d="M375 92v55m0 20v14m0 20v50m0 20v14m0 10v75" stroke="#8c8c8c" />
      <path d="M149 347Q150 290 170 240M180 226q8-15 18-26M212 187Q280 125 350 121m15-1h20m25 1Q480 130 530 180m15 15q10 12 20 30M578 246Q600 290 602 347" />
      <path d="M375 347L155 230M375 347L524 212M375 347L579 246M375 347l-18 9m18-9l18 9" />
      <path d="M226 66l66-25M226 66l32 90M292 41l33 95M238 98l30-12M258 84l25 40M408 98l48 8M440 160l13-50M496 124l28 18M500 190l24 22M522 140l-60 68" />
    </g>
    <path d="M125 347C127 282 155 218 200 165C220 162 236 182 250 190L266 180C264 160 254 145 256 128C262 120 272 119 282 128C294 140 300 150 303 160L323 155C326 132 324 112 330 99Q338 95 345 99C356 114 362 130 364 146H386C390 125 398 108 408 98Q416 95 424 99C429 120 426 135 428 152L448 160C458 140 470 124 486 121Q495 120 496 126C494 145 490 165 486 180L500 190C515 180 532 163 550 165C596 218 626 282 628 347" stroke="#1d1a92" strokeWidth="4" />
    <g fill="#444" stroke="none">
      <text x="252" y="50">p</text><text x="248" y="94">s</text><text x="436" y="128">ha</text><text x="502" y="156">hf</text>
      <text x="464" y="212">h</text><text x="442" y="274">df</text><text x="472" y="294">d</text><text x="294" y="304">da</text>
    </g>
  </Serif>
)

const FormulaTable = styled.table`
  width: 181px;
  border-collapse: collapse;
  table-layout: fixed;
  font: 5px/6px "Liberation Serif", serif;
  text-align: center;
  color: #333;
  caption { background: #6b2c9b; color: #ffc659; font: bold 6px/12px "Liberation Serif", serif; }
  th { padding: 0; background: #6b2c9b; color: #fff; border: 1px solid #a98bc2; }
  thead tr { height: 18px; }
  tbody tr { height: 13px; }
  tbody tr:nth-child(12) { height: 15px; }
  td { padding: 0; background: #f1f4f6; }
  tr:nth-child(even) td { background: #e2e5e8; }
`
const formulas = [
  ['Modül', 'm', 'p/π = d/z = da/(z+2)', 'p/π'],
  ['Hatve (adım)', 'P', 'm.π = d.π/z = da.π.(z+2)', 'm. π'],
  ['Diş sayısı', 'z', 'd/m = d.π/p = (da-2m)/m', 'd/m'],
  ['Bölüm dairesi çapı', 'd', 'z.m = p.z/π = da-2m', 'z.m'],
  ['Diş üstü çapı', 'da', 'd+2.m= m(z+2)', 'm.(z+1,9)'],
  ['Diş dibi çapı', 'df', 'd-2,332 m = da-2h', 'm.(z-2,5)'],
  ['Diş yüksekliği', 'h', 'm.13/6=2,166 m', '0,7 p=2,2 m'],
  ['Diş üstü yüksekliği', 'ha', 'm=p/π', '0,3 p=0,95 m'],
  ['Diş dibi yüksekliği', 'hf', '7/6 m=1,166 m', '0,4 p=1,25 m'],
  ['Diş dolusu', 's', 'p/2', 'p.19/20 veya 39/80.p'],
  ['Diş boşluğu', 'e', 'p/2', '21/40.p  41/80.p'],
  ['Diş genişliği', 'b', 'az yük gelenlere (6-8)\nçok "     "    (8-12)', '-'],
  ['Merkezler arası', 'a', '(d₁+d₂)/2 = m(z₁+z₂)/2', '-'],
]
const Pre = styled.td`
  white-space: pre;
`
const Formulas = () => (
  <FormulaTable>
    <caption>Düz Dişli Çark Formülleri</caption>
    <colgroup><col width="52" /><col width="18" /><col width="56" /><col width="55" /></colgroup>
    <thead><tr><th>Adı</th><th>İşaret</th><th>Tezgahta Açılan Dişliler (İşlenmiş)</th><th>Modeli Yapılan Dişliler (Kaba)</th></tr></thead>
    <tbody>
      {formulas.map(([name, ...rest]) => (
        <tr key={name}><th>{name}</th>{rest.map((t, i) => <Pre key={i}>{t}</Pre>)}</tr>
      ))}
    </tbody>
  </FormulaTable>
)

const notes = [
  [95, 'Düz dişli çark için gerekli hesaplamalar;', ''],
  [124, 'Adım', 'p = π.m = 3,14.2,5=7,85 mm'],
  [155, 'Bölüm dairesi çapı', 'd = m . z = 2,5.30=75 mm'],
  [186, 'Diş üstü çapı', 'da = d+2.m = 75+(2.2,5)=80 mm'],
  [217, 'Diş dibi çapı', 'df = d-2,332 . m = 75-(2,332.2,5)=69,17 mm'],
  [248, 'Diş yüksekliği', 'h= 2,166 . m =2,166.2,5= 5,415 mm'],
  [279, 'Diş üstü yüksekliği', 'ha= m =2,5'],
  [310, 'Diş dibi yüksekliği', 'hf=1,166 . m = 1,166.2,5=2,915 mm'],
  [341, 'Diş genişliği', 'b = 16 mm'],
]
const gearData = [
  [151, 'Modül', 'm', '2,5'], [177, 'Diş Sayısı', 'z', '30'], [204, 'Diş Profili', '', '20,0031'],
  [230, 'Diş Derinliği', 'h', '5,415'], [258, 'Eş Dişli Diş Sayısı', 'Zg', '-----'], [284, 'Eksenler Arası', 'a', '-----'],
]
const SheetDrawing = () => (
  <Serif width="260" height="385" viewBox="0 0 780 1155" fill="none">
    <g stroke="#a3a3a3" strokeWidth="2">
      <path d="M168 262h86M168 566h86M170 262v304M190 271h70M190 556h70M191 271v285M220 282h36M220 545h36M220 282v263M257 570v34M295 570v34M257 601h38" />
      <path d="M244 251h20m8 0h8m8 0h20M244 576h20m8 0h8m8 0h20M250 271h56M250 556h56M244 414h20m8 0h8m8 0h20" stroke="#777" />
      <path d="M515 318v24M553 318v24M515 322h38M553 344h84M533 470h104M634 344v126M476 418v94M590 418v94M476 509h114" />
      <path d="M466 414h40m10 0h10m4 0h10m6 0h50M533 335v50m0 10v10m0 6v10m0 6v50" stroke="#888" />
      <path d="M258 305l22-22M258 325l37-37M258 343l37-37M275 343l20-20M258 495l22-22M258 515l37-37M258 535l37-37M268 545l27-27M285 545l10-10" stroke="#77a6d8" />
    </g>
    <path d="M257 268q0-6 6-6h26q6 0 6 6v292q0 6-6 6h-26q-6 0-6-6zM257 282h38M257 344h38M257 355h38M257 470h38M257 545h38" stroke="#1512a5" strokeWidth="4" />
    <path d="M515 360V344h38v16A57 57 0 11515 360z" stroke="#1512a5" strokeWidth="4" />
    <g fill="#444" fontSize="17" fontStyle="italic">
      <text transform="translate(165 428) rotate(-90)">Ø80</text>
      <text transform="translate(188 426) rotate(-90)">Ø75</text>
      <text transform="translate(215 434) rotate(-90)">Ø69,17</text>
      <text transform="translate(630 420) rotate(-90)">32,3</text>
      <text x="268" y="599">16</text><text x="525" y="320">10</text><text x="520" y="507">Ø30</text>
    </g>
    <rect x="36" y="49" width="704" height="1093" stroke="#3d0610" strokeWidth="6" />
    <rect x="37" y="51" width="704" height="1092" stroke="#8a1f2d" strokeWidth="2" />

    <g transform="translate(0 645)">
      <g fill="#000" fontSize="15" fontStyle="italic" fontWeight="700">
        {notes.map(([y, a, b]) => <React.Fragment key={y}><text x="65" y={y}>{a}</text><text x="198" y={y}>{b}</text></React.Fragment>)}
        <text x="620" y="51" fontSize="13">İndüksiyon sertleştirm</text><text x="620" y="67" fontSize="13">HRc : 52±1</text><text x="620" y="83" fontSize="13">Sd : 0,8</text>
        <text x="586" y="122" fontSize="18" fontWeight="400">Düz Dişli Çark</text>
        {gearData.map(([y, a, b, c]) => (
          <g key={y} fontSize="12"><text x="538" y={y}>{a}</text><text x="664" y={y} textAnchor="middle">{b}</text><text x="712" y={y} textAnchor="middle">{c}</text></g>
        ))}
        <g fontSize="15" textAnchor="middle">
          <text x="140" y="379">Tarih</text><text x="226" y="379">Adı/Soyadı</text><text x="320" y="380">İmza</text><text x="397" y="379">Sayı</text>
          <text x="64" y="398">Çizen</text><text x="70" y="417">Kontrol</text><text x="72" y="436">St. Kont</text><text x="72" y="456">Ölçek</text>
          <text x="590" y="389" fontSize="13">İZMİT MESLEKİ VE TEKNİK ANADOLU LİSESİ</text>
          <text x="588" y="411" fontSize="13">MAKİNE VE TASARIM TEKNOLOJİSİ ALANI</text>
          <text x="608" y="456">Resim No:</text>
          <text x="72" y="488" fontSize="25">1/1</text><text x="320" y="479" fontSize="25">DÜZ DİŞLİ ÇARK UYGULAMASI 1</text><text x="606" y="486" fontSize="25">191</text>
        </g>
        <text transform="translate(31 490) rotate(-90)" fontSize="12">AUTOCAD İLE ÇİZİM 2021</text>
      </g>
      <path d="M534 47h24m10 0h10m10 0h22" stroke="#888" strokeWidth="2" />
      <g stroke="#5c0f1b" strokeWidth="4">
        <path d="M531 100h210v192H531zM531 131h210M531 157h210M531 183h210M531 210h210M531 238h210M531 265h210M683 131v161" />
        <path d="M36 364h704M36 383h322M36 402h322M36 421h398M36 440h704M113 364v132M169 364v76M283 364v76M358 364v76M436 364v76M531 440v56M531 458h154M685 440v56M36 458h77" />
      </g>
      <circle cx="712" cy="457" r="12" fill="#fff6c9" stroke="#8c8a55" strokeWidth="5" />
      <path d="M700 470h24l-4 10h10v14h-34v-14h8z" fill="#4a4d4f" />
    </g>
  </Serif>
)

const Cursor = () => (
  <svg width="66" height="66" viewBox="0 0 66 66" fill="none" stroke="#888"><path d="M33.500 0v30M33.500 36v30M0 33.500h30M36 33.500h30M31 31h5v5h-5z" /></svg>
)
const Ucs = () => (
  <svg width="62" height="62" viewBox="0 0 62 62" fill="none" stroke="#777"><path d="M4.500 52V12.500M4.500 53.500h42M1.500 49.500h7v7h-7zM5 1l5 5.500L15 1M10 6v5M48 43l10 11M58 43L48 54" /></svg>
)
const NavIcons = () => (
  <svg width="21" height="192" viewBox="0 0 21 192" fill="none" stroke="#e2e2e2">
    <circle cx="18" cy="4" r="2" />
    <path d="M3 17l8-4 8 3v9l-8 5-8-4zM3 17l8 4 8-5M11 21v9" /><circle cx="11" cy="45" r="9" /><rect x="6" y="40" width="10" height="10" rx="3" />
    <path d="M9 62h4l-2 2zM0 68h21M4 80l4 7h8l3-9M7 82l-1-8M10 80V71M13 80l2-9M4 80q-1-4 1-3M2 96l12 12M14 96L2 108" /><circle cx="15" cy="108" r="4" />
    <path d="M9 120h4l-2 2zM11 128v16M8 131l3-4 3 4M8 141l3 4 3-4M9 152h4l-2 2M2 161h5v5H2zM8 161h5v5H8zM14 161h5v5h-5zM3 168h12v11H3zM7 170l5 3-5 4z" /><ellipse cx="11" cy="137" rx="8" ry="4" /><circle cx="18" cy="188" r="2" />
  </svg>
)

const LogoBox = styled.div`
  position: absolute;
  right: 3px;
  bottom: 1px;
`
const Logo = () => (
  <svg width="64" height="74" viewBox="0 0 192 222" fontFamily="DejaVu Sans, sans-serif">
    <defs>
      <radialGradient id="pink"><stop offset="0" stopColor="#f2a0bd" /><stop offset=".65" stopColor="#d97b9c" /><stop offset="1" stopColor="#6d2f44" /></radialGradient>
      <clipPath id="disc"><circle cx="95" cy="95" r="93" /></clipPath>
    </defs>
    <circle cx="95" cy="95" r="92" fill="url(#pink)" stroke="#2b1a20" strokeWidth="4" />
    <g clipPath="url(#disc)">
      <circle cx="68" cy="35" r="7" fill="#e2581f" />
      <path d="M54 36l8 10q6-2 12-2l14-4-10 12 4 8-16 14q-10 6-14 2 6-6 4-14-6-10-2-26z" fill="#e2581f" />
      <circle cx="124" cy="35" r="7" fill="#2463ad" />
      <path d="M138 36l-8 10q-6-2-12-2l-14-4 10 12-4 8 16 14q10 6 14 2-6-6-4-14 6-10 2-26z" fill="#2463ad" />
      <path d="M36 52q-8 16 2 38l22 18q20 0 34 16M154 52q8 16-2 38l-22 18q-20 0-34 16M60 84q20 2 34 34M130 84q-20 2-34 34" fill="none" stroke="#7b4258" strokeWidth="2" />
      <text x="97" y="133" fontSize="27" fontWeight="700" textAnchor="middle" fill="#120a0d">İzmit MTAL</text>
      <path d="M0 142h58q12 16 38 16t38-16h58v12h-52q-14 18-44 18t-44-18H0z" fill="#1f4a38" stroke="#111" strokeWidth="2" />
      <text x="97" y="152" fontSize="15" fontWeight="700" textAnchor="middle" fill="#111">1940</text>
    </g>
    <text x="98" y="212" fontSize="32" fontStyle="italic" textAnchor="middle" fill="#333" fontFamily="Open Sans, sans-serif">EĞİTİM TV</text>
  </svg>
)

const Log = styled.div`
  position: absolute;
  left: 271px;
  bottom: 25px;
  display: flex;
  flex-direction: column;
  align-items: flex-start;
  gap: 5px;
  font: 10px/12px "Liberation Mono", monospace;
  white-space: pre;
  color: #fff;
`
const LogLine = styled.span`
  padding: 0 1px;
  background: rgba(150, 150, 150, ${p => p.$a});
`
const Command = styled.div`
  position: absolute;
  left: 220px;
  right: 217px;
  bottom: 1px;
  height: 22px;
  display: flex;
  border: 1px solid #777;
  border-radius: 2px;
  background: #fff;
  align-items: center;
`
const Handle = styled.div`
  display: flex;
  align-items: center;
  gap: 5px;
  width: 44px;
  height: 100%;
  padding-left: 2px;
  background: #6b6c7b;
`
const Prompt = styled.input`
  flex: 1;
  margin: 0 5px;
  padding: 1px 0 0;
  border: 0;
  background: none;
  font: italic 10px/14px "Liberation Mono", monospace;
  &::placeholder { color: #8d8d8d; opacity: 1; }
`

const ModelSpace = () => (
  <Canvas>
    <ViewLabel>[−][Top][2D Wireframe]</ViewLabel>
    <WindowButtons>
      <svg width="12" height="12" viewBox="0 0 12 12" fill="none" stroke="#555"><path d="M1 6.500h10v3H1z" /></svg>
      <svg width="12" height="12" viewBox="0 0 12 12" fill="none" stroke="#555"><path d="M1.500 3.500h7v7h-7zM3.500 3V1.500h7v7H9M3.500 7h3M5 5.500v3" /></svg>
      <svg width="12" height="12" viewBox="0 0 12 12" fill="none" stroke="#555"><path d="M1 1.500h3l2 2 2-2h3L8.500 6l2.500 4.500H8l-2-2-2 2H1L3.500 6z" /></svg>
    </WindowButtons>
    <Item $x={5} $y={82}><Gear /></Item>
    <Item $x={40} $y={204}><Formulas /></Item>
    <Item $x={232} $y={86}><svg width="6" height="6" viewBox="0 0 6 6" fill="none" stroke="#777"><path d="M.5 6V1.500H5" /></svg></Item>
    <Item $x={240} $y={77}><SheetDrawing /></Item>
    <Item $x={343} $y={315}><Cursor /></Item>
    <Item $x={9} $y={434}><Ucs /></Item>
    <NavBar><NavIcons /></NavBar>
    <LogoBox><Logo /></LogoBox>
    <Log>
      <LogLine $a={0.4}>Command: _TEXTEDIT</LogLine>
      <LogLine $a={0.5}>Current settings: Edit mode = Multiple</LogLine>
      <LogLine $a={0.8}>Select an annotation object or [Undo/Mode]:</LogLine>
    </Log>
    <Command>
      <Handle>
        <Icon name="grip" w={6} h={15} />
        <Icon name="close" w={10} box={14} />
        <Icon name="wrench" w={14} />
      </Handle>
      <Icon name="prompt" w={20} h={14} />
      <Caret c="#777" />
      <Prompt placeholder="Type a command" aria-label="Command" />
      <svg width="14" height="6" viewBox="0 0 14 6"><path d="M4 5h6L7 1z" fill="#888" /></svg>
    </Command>
  </Canvas>
)

// ---------- bottom ----------
const Bottom = styled.footer`
  display: flex;
  flex-direction: column;
  height: 38px;
`
const Layouts = styled.nav`
  display: flex;
  height: 16px;
  padding-left: 8px;
`
const LayoutTab = styled.button`
  width: ${p => p.$w}px;
  color: ${p => p.$on ? '#fff' : '#a5a8b2'};
  font-weight: ${p => p.$on ? 700 : 400};
  background: ${p => p.$on ? panel : '#2d303c'};
  clip-path: polygon(0 0, 100% 0, calc(100% - 5px) 100%, 5px 100%);
`
const Status = styled.div`
  display: flex;
  justify-content: flex-end;
  height: 20px;
  margin-top: 1px;
`
const StatusButton = styled.button`
  width: ${p => p.$w}px;
  display: flex;
  justify-content: center;
  align-items: center;
  background: ${p => p.$on ? '#5b8fc4' : '#303445'};
  font-weight: ${p => p.$bold ? 600 : 400};
  ${p => p.$end && css`border-right: 2px solid ${dark};`}
`
const Progress = styled.div`
  height: 1px;
  width: 286px;
  margin-left: 39px;
  background: #6e7378;
`

const status = [
  ['grid', 20], ['snap', 20], ['', 16], ['ortho', 20, 1], ['polar', 20], ['', 13], ['iso', 20], ['', 14],
  ['track', 20, 1], ['osnap', 20, 1], ['', 14], ['lwt', 20, 1], ['anno1', 22, 1], ['anno2', 19], ['anno3', 20],
]
const status2 = [['gear', 19], ['', 16], ['plus', 20], ['isolate', 23], ['perf', 26], ['full', 24], ['menu', 19]];

const StatusItem = ({ item: [n, w, on] }) => (
  <StatusButton $w={w} $on={on} $end={!n} aria-label={n || 'Options'}>
    {n === 'perf' ? <Icon name="perf" w={19} /> : n ? <Icon name={n} w={15} /> : <Caret />}
  </StatusButton>
)

const App = () => (
  <>
    <GlobalStyle />
    <Frame>
      <Shell>
        <TopBar />
        <Tabs>
          {['Home', 'Insert', 'Annotate', 'Parametric', 'View', 'Manage', 'Output', 'Add-ins', 'Collaborate', 'Express Tools', 'Featured Apps'].map((t, i) =>
            <Tab key={t} $on={i === 0}>{t}</Tab>
          )}
          <Toggle aria-label="Minimize ribbon">
            <svg width="13" height="8" viewBox="0 0 13 8"><path d="M4.500 5h4l-2-2.500z" fill="#333" /></svg>
            <Caret s={4} />
          </Toggle>
        </Tabs>
        <RibbonBar />
        <FileTabs>
          <FileTab $w={103}>Start</FileTab>
          <FileTab $w={107} $on>Drawing4*<Icon name="close" w={11} box={14} /></FileTab>
          <FileTab $w={28} aria-label="New tab"><svg width="8" height="8" viewBox="0 0 8 8"><path d="M4 0v8M0 4h8" stroke="#a5a8b2" strokeWidth="1.500" /></svg></FileTab>
        </FileTabs>
        <Body>
          <QuickCalc />
          <ModelSpace />
        </Body>
        <Bottom>
          <Layouts>
            <LayoutTab $w={47} $on>Model</LayoutTab>
            <LayoutTab $w={54}>Layout1</LayoutTab>
            <LayoutTab $w={54}>Layout2</LayoutTab>
            <LayoutTab $w={26}>+</LayoutTab>
          </Layouts>
          <Status>
            <StatusButton $w={42} $bold $end>MODEL</StatusButton>
            {status.map((s, i) => <StatusItem key={i} item={s} />)}
            <StatusButton $w={17}>1:1</StatusButton>
            <StatusItem item={['', 13]} />
            {status2.map((s, i) => <StatusItem key={i} item={s} />)}
          </Status>
          <Progress />
        </Bottom>
      </Shell>
    </Frame>
  </>
)

export default App
